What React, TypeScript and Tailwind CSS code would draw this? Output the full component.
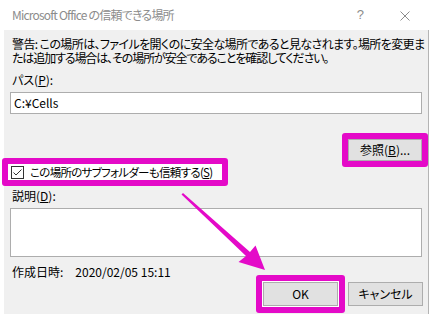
import React from "react";

const PINK = "#e40ac8";

export default function App() {
  return (
    <div className="relative w-[432px] h-[316px] overflow-hidden bg-white text-[12px] leading-[14px] text-black font-['Noto_Sans_CJK_JP','Noto_Sans',sans-serif] [font-feature-settings:'palt']">
      {/* Title bar */}
      <div className="h-[30px] flex items-center pl-[12px] pr-[22px] text-[#8c8c8c]">
        <span className="text-[12px] tracking-[-0.8px] whitespace-nowrap">Microsoft Office の信頼できる場所</span>
        <span className="ml-auto mr-[36px] text-[13px] font-['Liberation_Sans',sans-serif]">?</span>
        <svg width="10" height="10" viewBox="0 0 10 10" className="mt-[1px]">
          <path d="M0.5 0.5 L9.5 9.5 M9.5 0.5 L0.5 9.5" stroke="#8c8c8c" strokeWidth="1" fill="none" />
        </svg>
      </div>

      {/* Dialog body */}
      <div className="ml-[4px] w-[425px] h-[284px] bg-[#f0f0f0] border-r border-[#b4b4b4] flex flex-col">
        <div className="pl-[8px] pt-[7px] whitespace-nowrap">
          <div className="h-[14px] tracking-[-0.6px]">
            警告: この場所は、ファイルを開くのに安全な場所であると見なされます。場所を変更ま
          </div>
          <div className="h-[14px] tracking-[-1.1px]">
            たは追加する場合は、その場所が安全であることを確認してください。
          </div>
        </div>

        <div className="pl-[8px] mt-[8px]">
          パス(<span className="underline">P</span>):
        </div>
        <div className="ml-[6px] mt-[5px] w-[412px] h-[22px] bg-white border border-[#adadad] flex items-center pl-[3px]">
          C:¥Cells
        </div>

        {/* Browse */}
        <div className="flex justify-end mt-[19px]">
          <div className="rounded-[3px] border-[6px]" style={{ borderColor: PINK }}>
            <button className="w-[74px] h-[22px] bg-[#e1e1e1] border border-[#adadad] flex items-center justify-center whitespace-nowrap">
              参照(<span className="underline">B</span>)...
            </button>
          </div>
        </div>

        {/* Subfolder checkbox */}
        <div
          className="-ml-[2px] -mt-[9px] w-[226px] h-[28px] rounded-[3px] border-[6px] bg-white flex items-center pl-[3px]"
          style={{ borderColor: PINK }}
        >
          <svg width="13" height="13" viewBox="0 0 13 13" className="shrink-0">
            <rect x="0.5" y="0.5" width="12" height="12" fill="white" stroke="#333" />
            <path d="M2.5 6.5 L5 9 L10.5 3.5" stroke="#333" strokeWidth="1" fill="none" />
          </svg>
          <span className="ml-[6px] whitespace-nowrap text-[11.5px] tracking-[-0.7px]">
            この場所のサブフォルダーも信頼する(<span className="underline">S</span>)
          </span>
        </div>

        <div className="pl-[8px] mt-[3px]">
          説明(<span className="underline">D</span>):
        </div>
        <div className="ml-[6px] mt-[5px] w-[412px] h-[49px] bg-white border border-[#adadad]" />

        {/* Footer */}
        <div className="flex items-start">
          <div className="pl-[8px] mt-[8px] flex whitespace-nowrap">
            <span>作成日時:</span>
            <span className="ml-[12px]">2020/02/05 15:11</span>
          </div>
          <div className="ml-auto mr-[5px] mt-[18px] flex items-start gap-[3px]">
            <div className="rounded-[3px] border-[6px] bg-white p-[1px]" style={{ borderColor: PINK }}>
              <button className="w-[75px] h-[24px] bg-[#e1e1e1] border border-[#adadad] flex items-center justify-center">
                OK
              </button>
            </div>
            <button className="mt-[7px] w-[75px] h-[24px] bg-[#e1e1e1] border border-[#adadad] flex items-center justify-center">
              キャンセル
            </button>
          </div>
        </div>
      </div>

      {/* Annotation arrow */}
      <svg className="absolute left-0 top-0 pointer-events-none" width="432" height="316" viewBox="0 0 432 316">
        <path
          d="M181.5 194.5 L183 193 L250 252 L255.5 245.5 L265 270 L238.5 262 L246 256 Z"
          fill={PINK}
        />
      </svg>
    </div>
  );
}
